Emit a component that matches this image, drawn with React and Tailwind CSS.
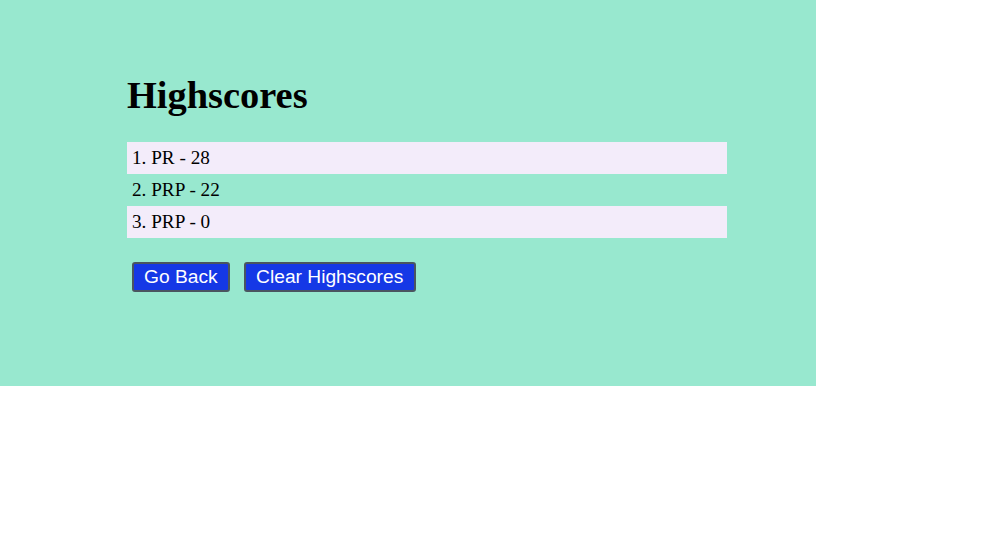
export default function App() {
  const scores = ["1. PR - 28", "2. PRP - 22", "3. PRP - 0"];
  return (
    <div className="w-[816px] h-[386px] bg-[#98e8cf] pt-[74px]" style={{ fontFamily: '"Liberation Serif", serif' }}>
      <div className="ml-[127px] w-[600px]">
        <h1 className="text-[38.4px] font-bold leading-[42.5px] mb-[25.5px] text-black">Highscores</h1>
        <ul>
          {scores.map((s, i) => (
            <li
              key={s}
              className={`h-[32px] pl-[5px] flex items-center text-[19.2px] text-black ${i % 2 === 0 ? "bg-[#f3ecfa]" : ""}`}
            >
              {s}
            </li>
          ))}
        </ul>
        <div className="mt-[24px] ml-[5px] flex gap-[14px]" style={{ fontFamily: '"Liberation Sans", Arial, sans-serif' }}>
          <button className="h-[30px] px-[10px] border-2 border-[#4a5560] rounded-[3px] bg-[#1538e6] text-white text-[19.2px] leading-[22px]">
            Go Back
          </button>
          <button className="h-[30px] pl-[10.5px] pr-[10.5px] border-2 border-[#4a5560] rounded-[3px] bg-[#1538e6] text-white text-[19.2px] leading-[22px]">
            Clear Highscores
          </button>
        </div>
      </div>
    </div>
  );
}
